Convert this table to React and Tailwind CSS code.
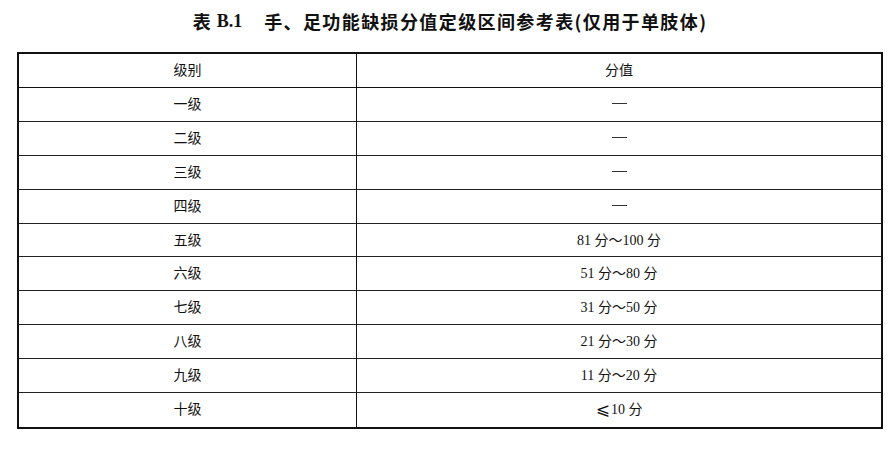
import React from "react";

const rows = [
  ["一级", "—"],
  ["二级", "—"],
  ["三级", "—"],
  ["四级", "—"],
  ["五级", "81 分～100 分"],
  ["六级", "51 分～80 分"],
  ["七级", "31 分～50 分"],
  ["八级", "21 分～30 分"],
  ["九级", "11 分～20 分"],
  ["十级", "LE"],
];

export default function App() {
  return (
    <div
      className="w-[896px] h-[449px] bg-white text-[#111] pt-[8px]"
      style={{ fontFamily: '"Liberation Serif", "Noto Sans CJK SC", serif' }}
    >
      <div
        className="h-[26px] flex items-center justify-center pl-[4px] text-[18px] font-bold leading-none"
        style={{ fontFamily: '"Noto Sans CJK SC", sans-serif' }}
      >
        <span>表</span>
        <span className="ml-[6px]" style={{ fontFamily: '"Liberation Serif", serif' }}>B.1</span>
        <span className="ml-[22px] tracking-[1.4px]">手、足功能缺损分值定级区间参考表(仅用于单肢体)</span>
      </div>
      <div className="ml-[17px] mt-[18px] w-[866px] border-2 border-[#111]">
        <div className="grid grid-cols-[338px_1fr] h-[34px] border-b-[1.5px] border-[#111] text-[14px]">
          <div className="flex items-center justify-center border-r-[1.5px] border-[#111]">级别</div>
          <div className="flex items-center justify-center">分值</div>
        </div>
        {rows.map(([a, b], i) => (
          <div
            key={i}
            className={
              "grid grid-cols-[338px_1fr] h-[33.9px] text-[14px] " +
              (i < rows.length - 1 ? "border-b-[1.5px] border-[#222]" : "")
            }
          >
            <div className="flex items-center justify-center border-r-[1.5px] border-[#111]">{a}</div>
            <div className="flex items-center justify-center">
              {b === "—" ? (
                <span className="inline-block w-[15px] h-px bg-[#333] -mt-[2px]"></span>
              ) : b === "LE" ? (
                <span className="flex items-center">
                  <span
                    className="text-[17px] leading-none mr-[1px]"
                    style={{ fontFamily: '"DejaVu Sans", serif' }}
                  >
                    ⩽
                  </span>
                  10 分
                </span>
              ) : (
                b
              )}
            </div>
          </div>
        ))}
      </div>
    </div>
  );
}
